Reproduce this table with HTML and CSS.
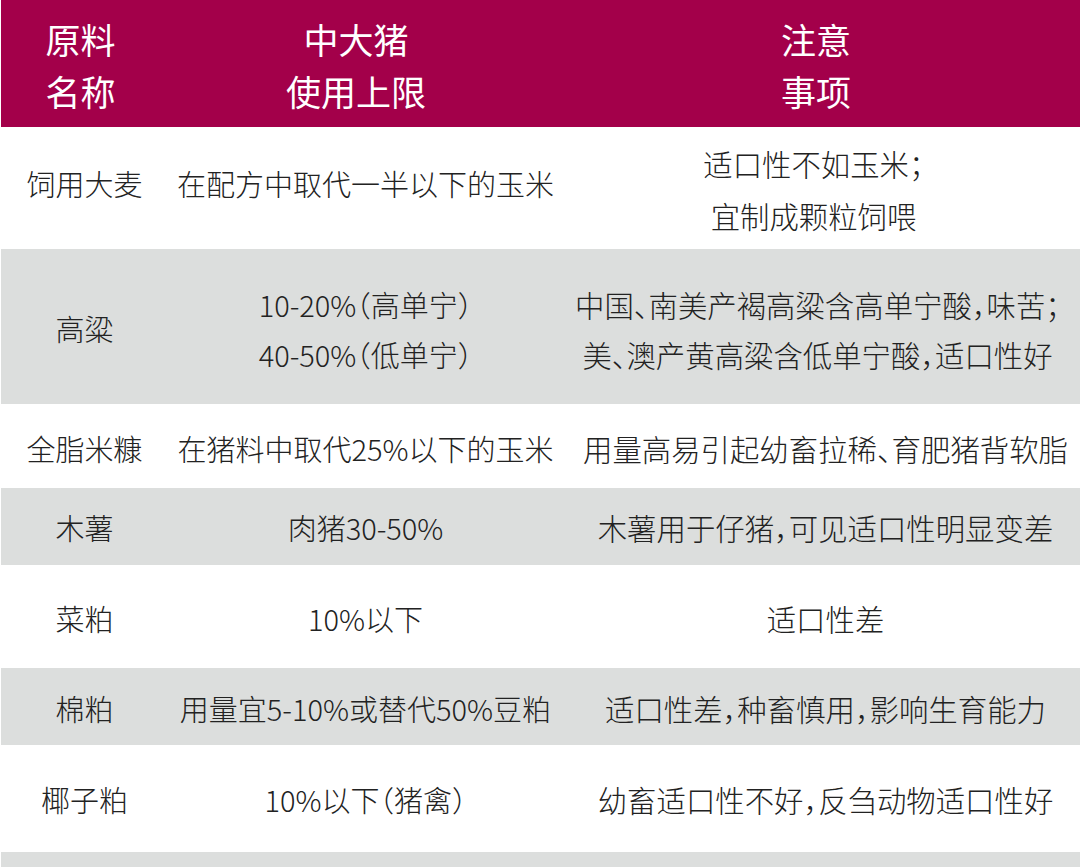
FILE: index.html
```html
<!DOCTYPE html>
<html lang="zh-CN">
<head>
<meta charset="utf-8">
<title>原料使用上限</title>
<link rel="stylesheet" href="styles.css">
</head>
<body>
<div class="table">
  <div class="head">
    <div class="hc">原料<br>名称</div>
    <div class="hc">中大猪<br>使用上限</div>
    <div class="hc">注意<br>事项</div>
  </div>
  <div class="row first h122">
    <div class="c1">饲用大麦</div>
    <div class="c2">在配方中取代一半以下的玉米</div>
    <div class="c3">适口性不如玉米；<br>宜制成颗粒饲喂</div>
  </div>
  <div class="row gray h155 second">
    <div class="c1">高粱</div>
    <div class="c2 tall">10-20%（高单宁）<br>40-50%（低单宁）</div>
    <div class="c3 tall">中国、南美产褐高粱含高单宁酸，味苦；<br>美、澳产黄高粱含低单宁酸，适口性好</div>
  </div>
  <div class="row h84">
    <div class="c1">全脂米糠</div>
    <div class="c2">在猪料中取代25%以下的玉米</div>
    <div class="c3">用量高易引起幼畜拉稀、育肥猪背软脂</div>
  </div>
  <div class="row gray h77 up">
    <div class="c1">木薯</div>
    <div class="c2">肉猪30-50%</div>
    <div class="c3">木薯用于仔猪，可见适口性明显变差</div>
  </div>
  <div class="row h103">
    <div class="c1">菜粕</div>
    <div class="c2">10%以下</div>
    <div class="c3">适口性差</div>
  </div>
  <div class="row gray h77">
    <div class="c1">棉粕</div>
    <div class="c2">用量宜5-10%或替代50%豆粕</div>
    <div class="c3">适口性差，种畜慎用，影响生育能力</div>
  </div>
  <div class="row h107 up">
    <div class="c1">椰子粕</div>
    <div class="c2">10%以下（猪禽）</div>
    <div class="c3">幼畜适口性不好，反刍动物适口性好</div>
  </div>
  <div class="row gray h77"></div>
</div>
</body>
</html>
```

FILE: styles.css
```css
html, body {
  margin: 0;
  padding: 0;
  background: #ffffff;
}

body {
  font-family: "Noto Sans CJK SC", "Noto Sans", sans-serif;
  color: #222222;
  width: 1080px;
  overflow: hidden;
}

.table {
  padding-left: 1px;
}

.head {
  display: grid;
  grid-template-columns: 159px 392px 1fr;
  height: 127px;
  align-items: center;
  background: #a3004a;
  color: #ffffff;
  font-size: 35px;
  font-weight: 400;
  line-height: 52px;
}

.hc {
  text-align: center;
  padding-top: 3px;
}

.row {
  display: grid;
  grid-template-columns: 167px 395px 1fr;
  align-items: center;
  background: #ffffff;
}

.row.gray {
  background: #dcdedd;
}

.h122 { height: 122px; }
.h155 { height: 155px; }
.h84 { height: 84px; }
.h77 { height: 77px; }
.h103 { height: 103px; }
.h107 { height: 107px; }

.c1, .c2, .c3 {
  text-align: center;
  white-space: nowrap;
  padding-top: 3px;
  font-size: 29px;
  line-height: 52px;
  font-weight: 300;
  font-feature-settings: "halt" 1;
}

.c3 {
  font-size: 29.4px;
  padding-left: 8px;
}

.up .c1, .up .c2, .up .c3 {
  padding-top: 0;
}

.first .c1, .first .c2 {
  padding-top: 0;
  padding-bottom: 10px;
}

.first .c3 {
  padding-top: 1px;
  padding-left: 0;
  padding-right: 16px;
}

.tall {
  line-height: 50px;
  padding-top: 4px;
}

.second .c3 {
  padding-left: 0;
  padding-right: 8px;
}
```
